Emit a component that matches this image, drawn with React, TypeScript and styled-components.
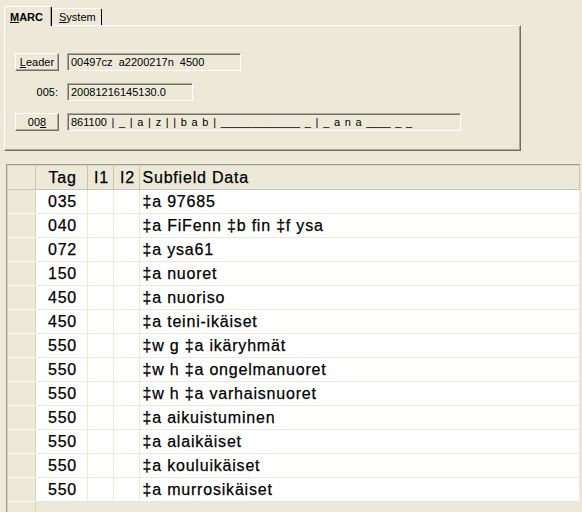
import styled, { createGlobalStyle } from 'styled-components';

const GlobalStyle = createGlobalStyle`
  html, body {
    margin: 0;
    padding: 0;
    background: #ece9d8;
  }
  body {
    width: 582px;
    height: 512px;
    overflow: hidden;
    font-family: "Liberation Sans", Arial, sans-serif;
    color: #000;
  }
`;

interface MarcField {
  tag: string;
  data: string;
}

const fields: MarcField[] = [
  { tag: '035', data: '‡a 97685' },
  { tag: '040', data: '‡a FiFenn ‡b fin ‡f ysa' },
  { tag: '072', data: '‡a ysa61' },
  { tag: '150', data: '‡a nuoret' },
  { tag: '450', data: '‡a nuoriso' },
  { tag: '450', data: '‡a teini-ikäiset' },
  { tag: '550', data: '‡w g ‡a ikäryhmät' },
  { tag: '550', data: '‡w h ‡a ongelmanuoret' },
  { tag: '550', data: '‡w h ‡a varhaisnuoret' },
  { tag: '550', data: '‡a aikuistuminen' },
  { tag: '550', data: '‡a alaikäiset' },
  { tag: '550', data: '‡a kouluikäiset' },
  { tag: '550', data: '‡a murrosikäiset' },
];

const Page = styled.div`
  display: flex;
  flex-direction: column;
  padding: 6px 0 0 4px;
`;

const TabStrip = styled.div`
  display: flex;
  align-items: flex-end;
  height: 19px;
  font-size: 11px;
`;

const Tab = styled.div<{ $active?: boolean; $width: number }>`
  box-sizing: border-box;
  width: ${(p) => p.$width}px;
  height: ${(p) => (p.$active ? 20 : 17)}px;
  margin-bottom: ${(p) => (p.$active ? -1 : 0)}px;
  padding-left: ${(p) => (p.$active ? 5 : 6)}px;
  padding-top: ${(p) => (p.$active ? 4 : 2)}px;
  background: #ece9d8;
  border-top: 1px solid #fff;
  border-left: 1px solid ${(p) => (p.$active ? '#fff' : '#ece9d8')};
  border-right: 1px solid #000;
  border-top-left-radius: 2px;
  border-top-right-radius: 2px;
  box-shadow: ${(p) => (p.$active ? 'inset -1px 0 #aca899' : 'none')};
  font-weight: ${(p) => (p.$active ? 'bold' : 'normal')};
  position: relative;
  z-index: ${(p) => (p.$active ? 1 : 0)};
  line-height: 13px;
`;

const Panel = styled.div`
  box-sizing: border-box;
  width: 517px;
  height: 126px;
  border-top: 1px solid #fff;
  border-left: 1px solid #fff;
  border-right: 1px solid #716f64;
  border-bottom: 1px solid #716f64;
  box-shadow: inset -1px -1px #aca899;
  padding: 27px 0 0 10px;
  display: flex;
  flex-direction: column;
  gap: 12px;
  font-size: 11px;
`;

const FieldRow = styled.div`
  display: flex;
  align-items: center;
  gap: 8px;
  height: 18px;
`;

const RaisedButton = styled.div`
  box-sizing: border-box;
  width: 44px;
  height: 18px;
  border: 1px solid;
  border-color: #fff #716f64 #716f64 #fff;
  box-shadow: inset -1px -1px #aca899;
  display: flex;
  align-items: center;
  justify-content: center;
  line-height: 14px;
`;

const FieldLabel = styled.div`
  width: 44px;
  text-align: right;
  padding-right: 1px;
  box-sizing: border-box;
`;

const ReadOnlyField = styled.div<{ $width: number; $wordSpacing?: number }>`
  box-sizing: border-box;
  width: ${(p) => p.$width}px;
  height: 18px;
  border: 1px solid;
  border-color: #aca899 #fff #fff #aca899;
  box-shadow: inset 1px 1px #716f64;
  padding: 1px 0 0 3px;
  line-height: 14px;
  word-spacing: ${(p) => p.$wordSpacing ?? 0}px;
  white-space: pre;
  overflow: hidden;
`;

const GridFrame = styled.div`
  box-sizing: border-box;
  width: 574px;
  margin: 13px 0 0 2px;
  border-top: 1px solid #a09d8e;
  border-left: 1px solid #a09d8e;
  box-shadow: inset 1px 1px #d8d4c4;
  padding: 1px 0 0 1px;
`;

const Table = styled.table`
  width: 100%;
  table-layout: fixed;
  border-collapse: collapse;
  font-size: 16px;
  letter-spacing: 0.8px;
  -webkit-text-stroke: 0.25px #000;
`;

const HeadCell = styled.th<{ $align?: 'left' | 'center' }>`
  height: 23px;
  padding: 0 0 0 3px;
  background: #ece9d8;
  border-right: 1px solid #c9c5b3;
  border-bottom: 1px solid #c9c5b3;
  font-weight: normal;
  text-align: ${(p) => p.$align ?? 'center'};
  white-space: nowrap;
  overflow: hidden;
`;

const RowHeadCell = styled.td`
  height: 23px;
  padding: 0;
  background: #ece9d8;
  border-right: 1px solid #d8d4c4;
  border-bottom: 1px solid #faf9f4;
`;

const DataCell = styled.td<{ $align?: 'left' | 'center' }>`
  height: 23px;
  padding: 0 0 0 3px;
  background: #fff;
  border-right: 1px solid #ece9d8;
  border-bottom: 1px solid #ece9d8;
  text-align: ${(p) => p.$align ?? 'left'};
  white-space: nowrap;
  overflow: hidden;
`;

const EmptyCell = styled.td`
  height: 12px;
  padding: 0;
  background: #ece9d8;
`;

const App = () => (
  <>
    <GlobalStyle />
    <Page>
      <TabStrip>
        <Tab $active $width={48}>
          <u>M</u>ARC
        </Tab>
        <Tab $width={50}>
          <u>S</u>ystem
        </Tab>
      </TabStrip>
      <Panel>
        <FieldRow>
          <RaisedButton>
            <span>
              <u>L</u>eader
            </span>
          </RaisedButton>
          <ReadOnlyField $width={174}>00497cz  a2200217n  4500</ReadOnlyField>
        </FieldRow>
        <FieldRow>
          <FieldLabel>005:</FieldLabel>
          <ReadOnlyField $width={126}>20081216145130.0</ReadOnlyField>
        </FieldRow>
        <FieldRow>
          <RaisedButton>
            <span>
              00<u>8</u>
            </span>
          </RaisedButton>
          <ReadOnlyField $width={394} $wordSpacing={1.6}>
            861100 | _ | a | z | | b a b | _____________ _ | _ a n a ____ _ _
          </ReadOnlyField>
        </FieldRow>
      </Panel>
      <GridFrame>
        <Table>
          <colgroup>
            <col style={{ width: 27 }} />
            <col style={{ width: 52 }} />
            <col style={{ width: 26 }} />
            <col style={{ width: 26 }} />
            <col />
          </colgroup>
          <thead>
            <tr>
              <HeadCell />
              <HeadCell>Tag</HeadCell>
              <HeadCell>I1</HeadCell>
              <HeadCell>I2</HeadCell>
              <HeadCell $align="left">Subfield Data</HeadCell>
            </tr>
          </thead>
          <tbody>
            {fields.map((field, index) => (
              <tr key={index}>
                <RowHeadCell />
                <DataCell $align="center">{field.tag}</DataCell>
                <DataCell />
                <DataCell />
                <DataCell>{field.data}</DataCell>
              </tr>
            ))}
            <tr>
              <RowHeadCell />
              <EmptyCell colSpan={4} />
            </tr>
          </tbody>
        </Table>
      </GridFrame>
    </Page>
  </>
);

export default App;
